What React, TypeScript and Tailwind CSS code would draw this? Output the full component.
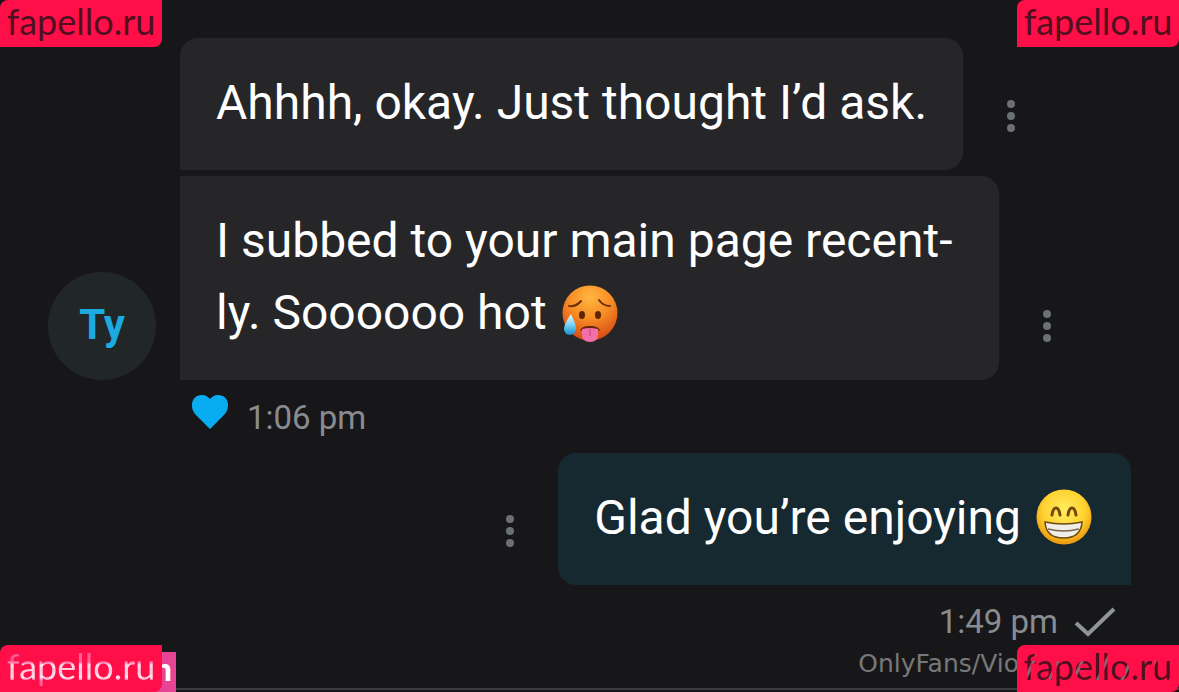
import React from "react";

function More({ label }: { label: string }) {
  return (
    <button type="button" aria-label={label} className="flex h-10 w-6 shrink-0 flex-col items-center justify-center gap-1">
      <span className="size-2 rounded-full bg-[#6b7071]" />
      <span className="size-2 rounded-full bg-[#6b7071]" />
      <span className="size-2 rounded-full bg-[#6b7071]" />
    </button>
  );
}

function HotFace() {
  return (
    <svg viewBox="0 0 56 58" className="ml-[15px] inline-block h-[58px] w-14 align-[-14px]" role="img" aria-label="hot face">
      <defs>
        <radialGradient id="hot" cx="50%" cy="22%" r="78%">
          <stop offset="0" stopColor="#ffb640" />
          <stop offset="0.5" stopColor="#f78c25" />
          <stop offset="1" stopColor="#d74914" />
        </radialGradient>
        <linearGradient id="drop" x1="0" y1="0" x2="0" y2="1">
          <stop offset="0" stopColor="#e5faff" />
          <stop offset="0.5" stopColor="#7cd3f3" />
          <stop offset="1" stopColor="#168ed0" />
        </linearGradient>
      </defs>
      <circle cx="28" cy="28" r="27.5" fill="url(#hot)" />
      <path d="M7 21q7 1 12-5M37 15q4 6 11 6" fill="none" stroke="#713005" strokeWidth="2" strokeLinecap="round" />
      <ellipse cx="20" cy="30" rx="3" ry="4" fill="#5d2506" />
      <ellipse cx="36" cy="30" rx="3" ry="4" fill="#5d2506" />
      <path d="M18 46q1-5 10-5t10 5q-4-2-10-2t-10 2Z" fill="#64210b" />
      <path d="M20 44q8-2 16 0v6q0 7-8 7t-8-7Z" fill="#f36fa9" />
      <path d="M28 44v7" stroke="#ce3f7d" strokeWidth="1" />
      <path d="M9 29Q2 39 2 44a6 6 0 0 0 12 0Q14 39 9 29Z" fill="url(#drop)" />
    </svg>
  );
}

function GrinFace() {
  return (
    <svg viewBox="0 0 56 56" className="ml-[15px] inline-block size-14 align-[-11px]" role="img" aria-label="beaming face">
      <defs>
        <radialGradient id="grin" cx="50%" cy="38%" r="64%">
          <stop offset="0" stopColor="#ffee61" />
          <stop offset="0.6" stopColor="#ffd22f" />
          <stop offset="1" stopColor="#e8920c" />
        </radialGradient>
      </defs>
      <circle cx="28" cy="28" r="27.5" fill="url(#grin)" />
      <path d="M16 26q1-7 4-7t4 7M32 26q1-7 4-7t4 7" fill="none" stroke="#78480a" strokeWidth="3" strokeLinecap="round" />
      <path d="M9 33q19 4 37 0-1 16-18.500 16T9 33Z" fill="#f0eeea" stroke="#6d4810" strokeWidth="1.5" />
      <path d="M12 40q16 4 31 0" fill="none" stroke="#7b6544" strokeWidth="1.5" />
    </svg>
  );
}

function Stamp({ className, textClass }: { className: string; textClass: string }) {
  return (
    <div className={`absolute flex h-[47px] w-[162px] items-start justify-center rounded-tl-lg rounded-br-lg bg-[#ff0e47] font-['Lato',sans-serif] text-[36px] leading-[44px] ${className}`}>
      <span className={`-mt-px ${textClass}`}>fapello.ru</span>
    </div>
  );
}

export default function App() {
  return (
    <main className="relative min-h-screen overflow-hidden bg-[#171719] pt-[38px] font-['Roboto',sans-serif] text-white">
      <div className="flex items-end gap-6 pl-12">
        <div className="flex size-[108px] shrink-0 items-center justify-center rounded-full bg-[#212627] pb-1 text-[42px] font-bold text-[#1cabe1]">Ty</div>
        <div className="flex min-w-0 flex-col gap-1.5">
          <div className="flex items-center gap-9">
            <p className="rounded-t-[18px] rounded-br-[18px] bg-[#262628] px-9 pt-[29px] pb-[31px] text-[48px] leading-[72px] whitespace-nowrap">Ahhhh, okay. Just thought I’d ask.</p>
            <div className="pt-6"><More label="Message options" /></div>
          </div>
          <div className="flex items-center gap-9">
            <p className="rounded-r-[18px] bg-[#262628] pt-[29px] pr-[47px] pb-[31px] pl-9 text-[48px] leading-[72px] whitespace-nowrap">
              I subbed to your main page recent-<br />ly. Soooooo hot<HotFace />
            </p>
            <div className="pt-24"><More label="Message options" /></div>
          </div>
        </div>
      </div>
      <div className="flex h-[73px] items-center gap-[19px] pl-48 text-[33px] text-[#888c90]">
        <button type="button" aria-label="Unlike message" className="pb-2.5">
          <svg viewBox="0 0 36 34" className="h-[34px] w-9"><path d="M18 34 5 21C1 17 0 14 0 10 0 4 4 0 10 0c4 0 6 2 8 4 2-2 4-4 8-4 6 0 10 4 10 10 0 4-1 7-5 11Z" fill="#08adf1" /></svg>
        </button>
        <time className="pt-0.5">1:06 pm</time>
      </div>
      <div className="flex items-center justify-end gap-9 pr-12">
        <div className="pt-6"><More label="Message options" /></div>
        <p className="rounded-t-[18px] rounded-bl-[18px] bg-[#162830] pt-[29px] pr-[39px] pb-[31px] pl-9 text-[48px] leading-[72px] whitespace-nowrap">Glad you’re enjoying<GrinFace /></p>
      </div>
      <div className="flex h-[74px] items-center justify-end gap-4 pr-[63px] text-[33px] text-[#888c90]">
        <time>1:49 pm</time>
        <svg viewBox="0 0 42 30" className="h-[30px] w-[42px]" aria-label="Sent"><path d="m2 16 12 11L40 2" fill="none" stroke="#8e9498" strokeWidth="4" /></svg>
      </div>
      <div className="absolute inset-x-0 bottom-0 h-1 border-t-2 border-[#3c3c3f]" />
      <div className="absolute bottom-0 left-0 flex h-10 w-44 items-center justify-end bg-[#e74495] pr-1 pb-1 text-[32px] font-bold">n</div>
      <Stamp className="top-0 left-0" textClass="text-[#51101f]" />
      <Stamp className="top-0 right-0" textClass="text-[#51101f]" />
      <Stamp className="bottom-0 left-0" textClass="bg-[linear-gradient(to_bottom,#ff5c96_40%,#ffe3ee_48%,#ffc4d9_60%,#ffe3ee_76%,#ff5c96_84%)] bg-clip-text text-transparent" />
      <div className="absolute right-[160px] bottom-3 font-['DejaVu_Sans',sans-serif] text-[25px] leading-8 text-[#77787a]">OnlyFans/Vio</div>
      <Stamp className="right-0 bottom-0" textClass="bg-[repeating-linear-gradient(115deg,#51101f_0_14px,#8f6570_15px_17px,#51101f_18px_22px)] bg-clip-text text-transparent" />
    </main>
  );
}
